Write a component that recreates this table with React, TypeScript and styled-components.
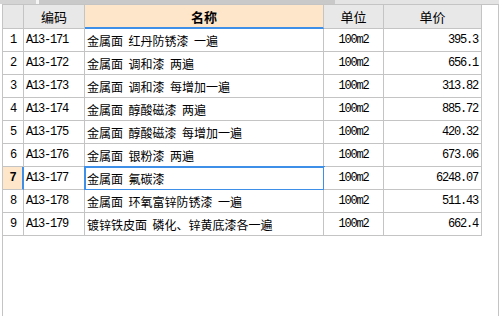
import styled, { createGlobalStyle, css } from "styled-components";

const GlobalStyle = createGlobalStyle`
html, body {
    margin: 0;
    padding: 0;
    background: #fff;
}
body {
    width: 499px;
    height: 316px;
    overflow: hidden;
    font-family: "Noto Sans CJK SC", "Liberation Sans", sans-serif;
    color: #000;
}
`;

const Page = styled.div`
display: flex;
flex-direction: column;
height: 316px;
`;

const Strip = styled.div`
display: flex;
height: 4px;
`;

const StripPart = styled.div<{ $w?: number; $color: string }>`
height: 100%;
background: ${(p) => p.$color};
${(p) => (p.$w ? `width: ${p.$w}px;` : "flex: 1;")}
`;

const Frame = styled.div`
flex: 1;
margin-left: 2px;
width: 497px;
box-sizing: border-box;
border: 1px solid #c4c4c4;
border-bottom: none;
`;

const Grid = styled.div`
display: grid;
grid-template-columns: 21px 61px 239px 60px 98px;
grid-auto-rows: 23px;
grid-template-rows: 24px;
width: 479px;
`;

const Cell = styled.div<{
    $align?: "left" | "center" | "right";
    $mono?: boolean;
    $head?: boolean;
    $peach?: boolean;
    $bold?: boolean;
}>`
box-sizing: border-box;
display: flex;
align-items: center;
justify-content: ${(p) =>
    p.$align === "right" ? "flex-end" : p.$align === "center" ? "center" : "flex-start"};
padding: ${(p) => (p.$align === "right" ? "0 3px 0 0" : p.$align === "center" ? "0" : "0 0 0 2px")};
border-right: 1px solid #c4c4c4;
border-bottom: 1px solid #c4c4c4;
background: ${(p) => (p.$peach ? "#fde6c9" : p.$head ? "#e8e8e8" : "#fff")};
font-size: ${(p) => (p.$head ? "13px" : "12px")};
font-weight: ${(p) => (p.$bold ? 700 : 400)};
word-spacing: 2.8px;
white-space: pre;
overflow: hidden;
${(p) =>
    p.$mono &&
    css`
        font-family: "Liberation Mono", "DejaVu Sans Mono", monospace;
        font-size: 12px;
        letter-spacing: -1.2px;
        word-spacing: 0;
    `}
`;

const HeadName = styled(Cell)`
border-bottom: 2px solid #3d8fe8;
`;

const ActiveNum = styled(Cell)`
border-right: 2px solid #3d8fe8;
`;

const Selected = styled(Cell)`
outline: 2px solid #3d8fe8;
outline-offset: -1px;
`;

type Item = { code: string; name: string; unit: string; price: string };

const items: Item[] = [
    { code: "A13-171", name: "金属面 红丹防锈漆 一遍", unit: "100m2", price: "395.3" },
    { code: "A13-172", name: "金属面 调和漆 两遍", unit: "100m2", price: "656.1" },
    { code: "A13-173", name: "金属面 调和漆 每增加一遍", unit: "100m2", price: "313.82" },
    { code: "A13-174", name: "金属面 醇酸磁漆 两遍", unit: "100m2", price: "885.72" },
    { code: "A13-175", name: "金属面 醇酸磁漆 每增加一遍", unit: "100m2", price: "420.32" },
    { code: "A13-176", name: "金属面 银粉漆 两遍", unit: "100m2", price: "673.06" },
    { code: "A13-177", name: "金属面 氟碳漆", unit: "100m2", price: "6248.07" },
    { code: "A13-178", name: "金属面 环氧富锌防锈漆 一遍", unit: "100m2", price: "511.43" },
    { code: "A13-179", name: "镀锌铁皮面 磷化、锌黄底漆各一遍", unit: "100m2", price: "662.4" },
];

const ACTIVE = 6;

export default function App() {
    return (
        <Page>
            <GlobalStyle />
            <Strip>
                <StripPart $w={36} $color="#d4d4d4" />
                <StripPart $w={3} $color="#f4f4f4" />
                <StripPart $w={296} $color="#c9c9c9" />
                <StripPart $color="#e4e4e4" />
            </Strip>
            <Frame>
                <Grid>
                    <Cell $head $align="center" />
                    <Cell $head $align="center">编码</Cell>
                    <HeadName $head $peach $bold $align="center">名称</HeadName>
                    <Cell $head $align="center">单位</Cell>
                    <Cell $head $align="center">单价</Cell>
                    {items.map((it, i) => {
                        const active = i === ACTIVE;
                        const Num = active ? ActiveNum : Cell;
                        const Name = active ? Selected : Cell;
                        return [
                            <Num key={`n${i}`} $mono $align="center" $peach={active} $bold={active}>
                                {i + 1}
                            </Num>,
                            <Cell key={`c${i}`} $mono>{it.code}</Cell>,
                            <Name key={`m${i}`}>{it.name}</Name>,
                            <Cell key={`u${i}`} $mono $align="center">{it.unit}</Cell>,
                            <Cell key={`p${i}`} $mono $align="right">{it.price}</Cell>,
                        ];
                    })}
                </Grid>
            </Frame>
        </Page>
    );
}
